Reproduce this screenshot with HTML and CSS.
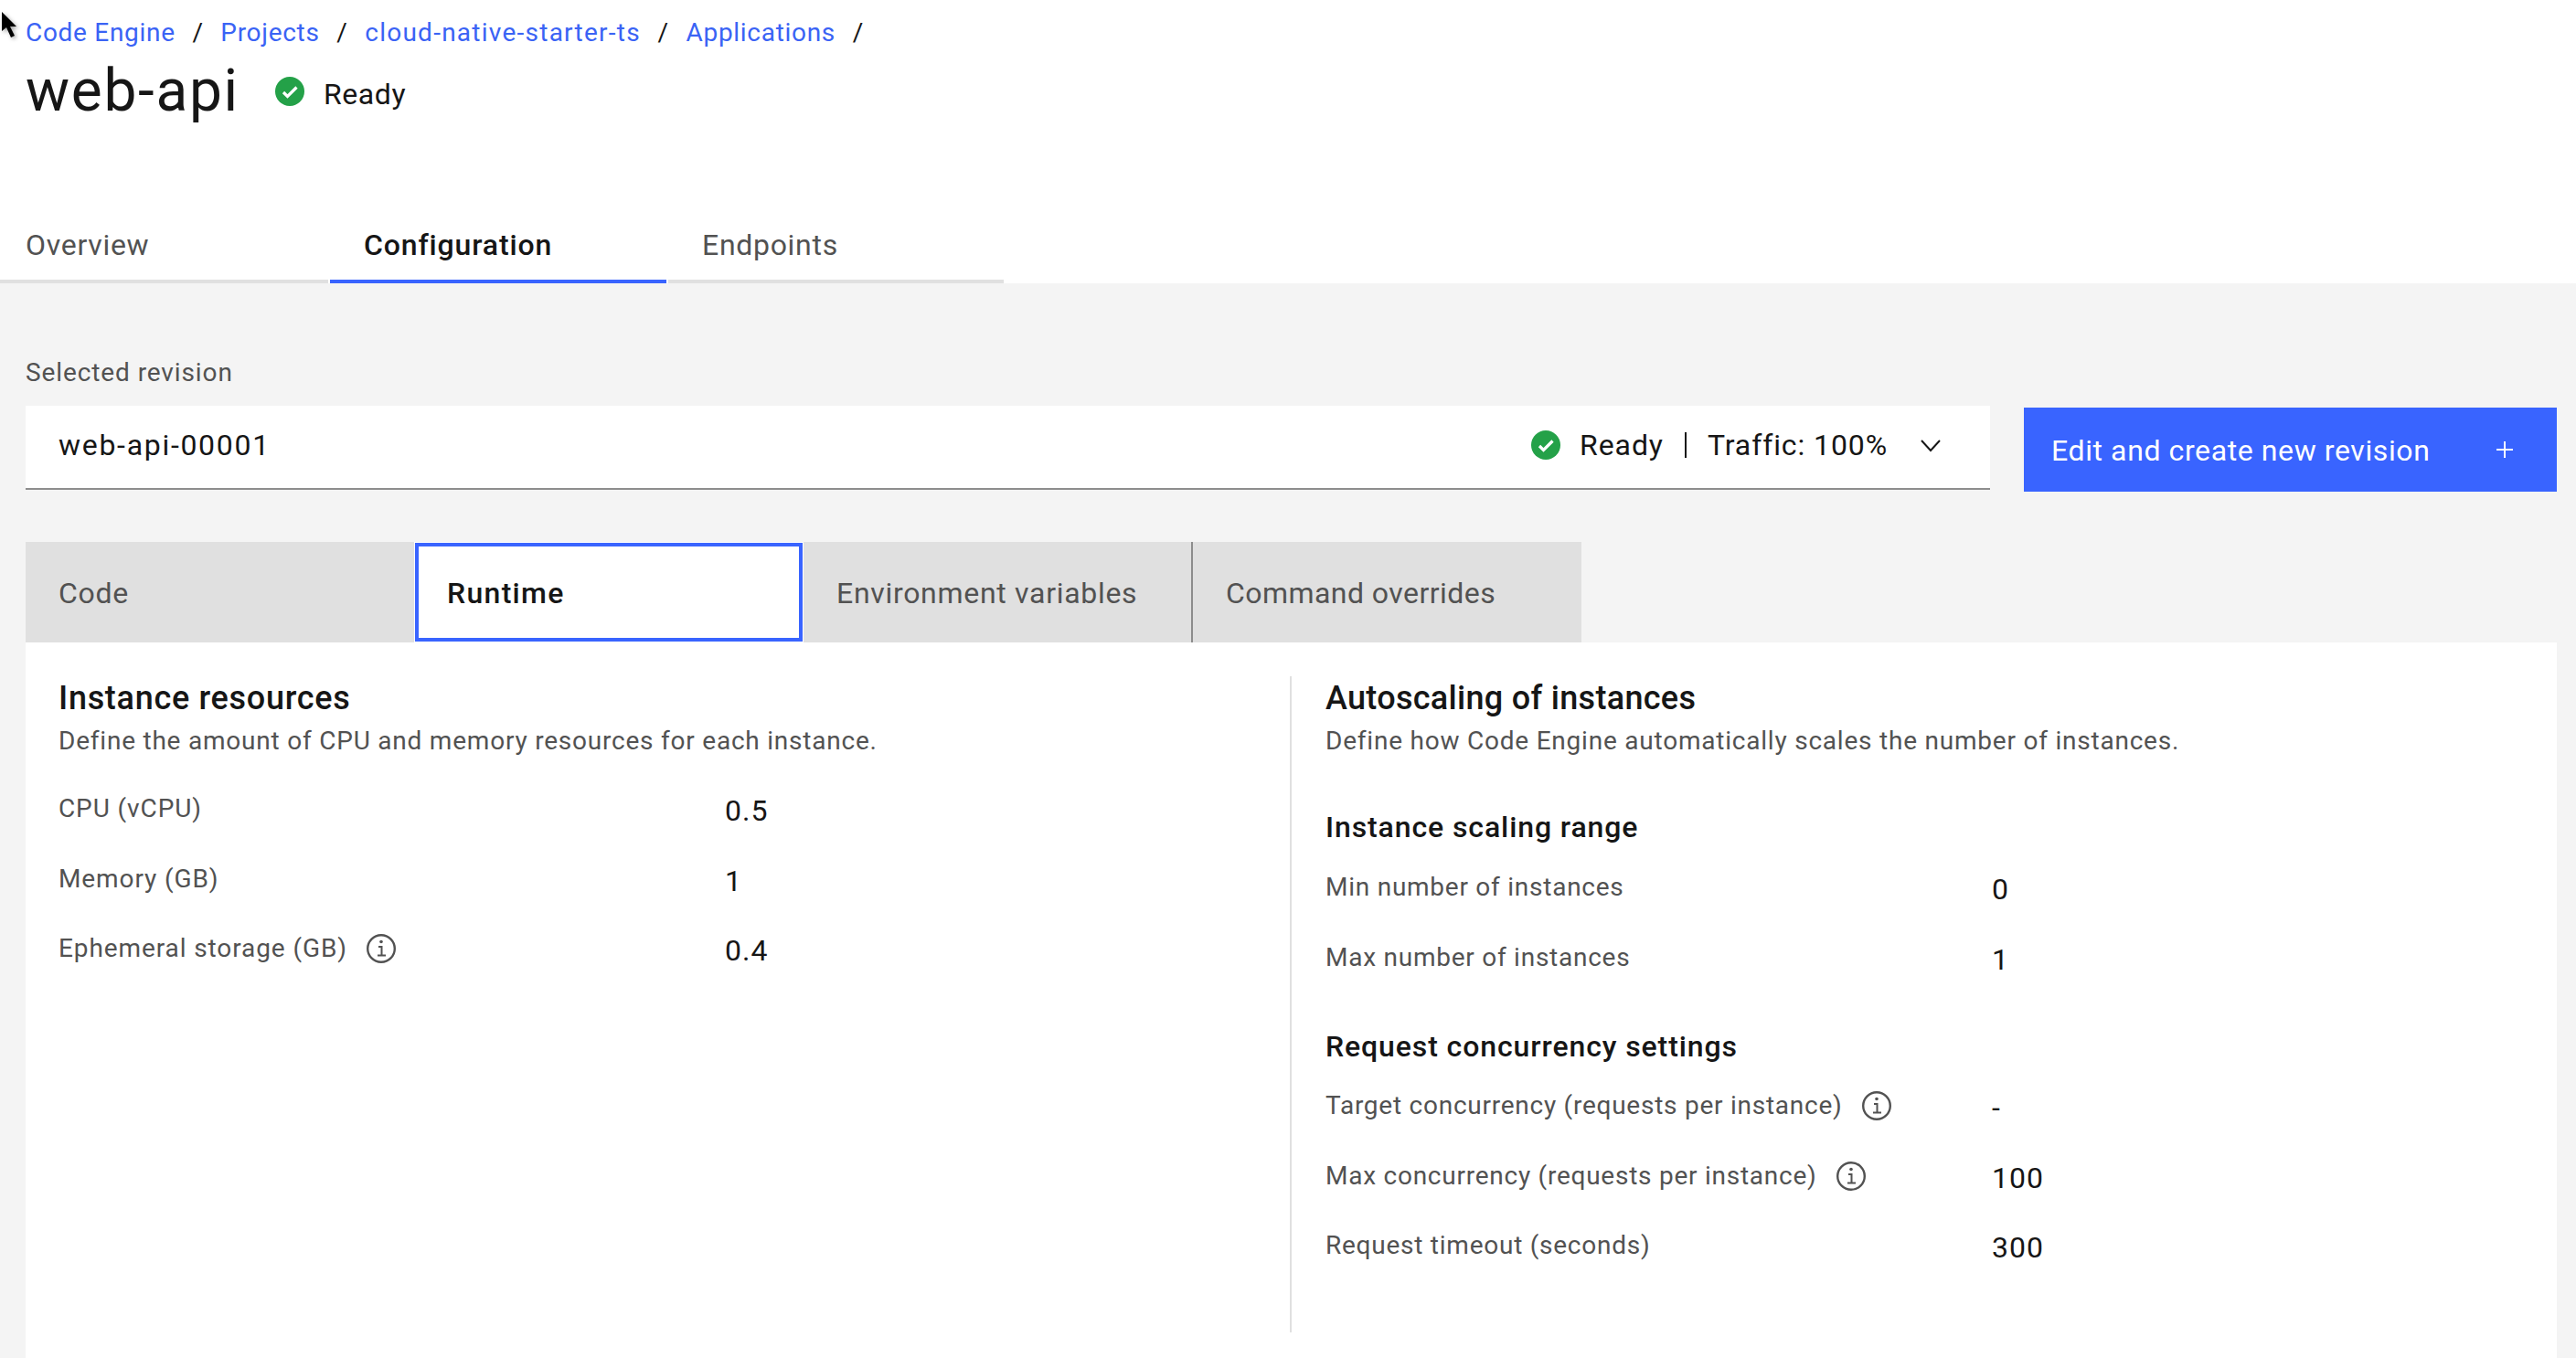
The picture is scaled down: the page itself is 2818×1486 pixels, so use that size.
FILE: index.html
```html
<!DOCTYPE html>
<html lang="en">
<head>
<meta charset="utf-8">
<title>web-api</title>
<link rel="stylesheet" href="styles.css">
</head>
<body>
<svg class="cursor" width="20" height="32" viewBox="0 0 20 32"><path d="M2 1v21l5-4 5 11 4-2-5-10h7z" fill="#000"/></svg>
<header class="top">
  <nav class="crumbs">
    <a>Code Engine</a><span class="sep">/</span><a>Projects</a><span class="sep">/</span><a class="crumb-long">cloud-native-starter-ts</a><span class="sep">/</span><a>Applications</a><span class="sep">/</span>
  </nav>
  <div class="title-row">
    <h1>web-api</h1>
    <svg class="ok ok-title" viewBox="0 0 32 32"><circle cx="16" cy="16" r="16" fill="#24a148"/><path d="M9 17l4.500 4.500L23.500 11.500" fill="none" stroke="#fff" stroke-width="3.200"/></svg>
    <span class="ready">Ready</span>
  </div>
  <div class="tabs">
    <div class="tab first">Overview</div>
    <div class="tab active">Configuration</div>
    <div class="tab last">Endpoints</div>
  </div>
</header>
<main class="main">
  <div class="field-label">Selected revision</div>
  <div class="rev-row">
    <div class="select">
      <span class="select-name">web-api-00001</span>
      <span class="select-status">
        <svg class="ok" viewBox="0 0 32 32"><circle cx="16" cy="16" r="16" fill="#24a148"/><path d="M9 17l4.500 4.500L23.500 11.500" fill="none" stroke="#fff" stroke-width="3.200"/></svg>
        <span>Ready</span><span class="pipe"></span><span>Traffic: 100%</span>
        <svg class="chev" viewBox="0 0 24 24"><path d="M2 5l10 11L22 5" fill="none" stroke="#161616" stroke-width="2"/></svg>
      </span>
    </div>
    <button class="primary"><span>Edit and create new revision</span><svg class="plus" viewBox="0 0 20 20"><path d="M10 1v18M1 10h18" stroke="#fff" stroke-width="2"/></svg></button>
  </div>
  <div class="ctabs">
    <div class="ctab">Code</div>
    <div class="ctab current">Runtime</div>
    <div class="ctab">Environment variables</div>
    <div class="ctab split">Command overrides</div>
  </div>
  <section class="panel">
    <div class="col col-left">
      <h2>Instance resources</h2>
      <p class="desc">Define the amount of CPU and memory resources for each instance.</p>
      <dl class="rows rows-left">
        <div class="row"><dt>CPU (vCPU)</dt><dd>0.5</dd></div>
        <div class="row"><dt>Memory (GB)</dt><dd>1</dd></div>
        <div class="row"><dt>Ephemeral storage (GB)<svg class="info" viewBox="0 0 32 32"><circle cx="16" cy="16" r="14.800" fill="none" stroke="#525252" stroke-width="2.400"/><path d="M13 14h3.500v9.500M12 23.500h9" fill="none" stroke="#525252" stroke-width="2"/><circle cx="16" cy="8.500" r="1.800" fill="#525252"/></svg></dt><dd>0.4</dd></div>
      </dl>
    </div>
    <div class="col col-right">
      <h2>Autoscaling of instances</h2>
      <p class="desc">Define how Code Engine automatically scales the number of instances.</p>
      <h3 class="h-range">Instance scaling range</h3>
      <dl class="rows rows-range">
        <div class="row"><dt>Min number of instances</dt><dd>0</dd></div>
        <div class="row"><dt>Max number of instances</dt><dd>1</dd></div>
      </dl>
      <h3 class="h-conc">Request concurrency settings</h3>
      <dl class="rows rows-conc">
        <div class="row"><dt>Target concurrency (requests per instance)<svg class="info" viewBox="0 0 32 32"><circle cx="16" cy="16" r="14.800" fill="none" stroke="#525252" stroke-width="2.400"/><path d="M13 14h3.500v9.500M12 23.500h9" fill="none" stroke="#525252" stroke-width="2"/><circle cx="16" cy="8.500" r="1.800" fill="#525252"/></svg></dt><dd>-</dd></div>
        <div class="row"><dt>Max concurrency (requests per instance)<svg class="info" viewBox="0 0 32 32"><circle cx="16" cy="16" r="14.800" fill="none" stroke="#525252" stroke-width="2.400"/><path d="M13 14h3.500v9.500M12 23.500h9" fill="none" stroke="#525252" stroke-width="2"/><circle cx="16" cy="8.500" r="1.800" fill="#525252"/></svg></dt><dd>100</dd></div>
        <div class="row"><dt>Request timeout (seconds)</dt><dd>300</dd></div>
      </dl>
    </div>
  </section>
</main>
</body>
</html>
```
FILE: styles.css
```css
* { box-sizing: border-box; }
html, body { margin: 0; height: 100%; }
body {
  position: relative;
  overflow: hidden;
  background: #f4f4f4;
  color: #161616;
  font-family: "Roboto", "Liberation Sans", sans-serif;
  font-size: 28px;
  height: 1486px;
}
.cursor { position: absolute; left: 0; top: 12px; filter: drop-shadow(2px 2px 2px rgba(0,0,0,.35)); }
.top { background: #fff; height: 310px; padding-top: 17px; }
.crumbs { display: flex; align-items: center; height: 36px; padding-left: 28px; font-size: 28px; letter-spacing: .7px; }
.crumbs a { color: #3a63f5; }
.crumb-long { letter-spacing: 1.25px; }
.sep { margin: 0 18.700px; color: #161616; }
.title-row { display: flex; align-items: center; height: 84px; padding-left: 28px; margin-top: 5px; }
h1 { margin: 0; font-size: 64px; font-weight: 400; line-height: 84px; letter-spacing: 1.7px; }
.ok { width: 32px; height: 32px; flex: none; }
.ok-title { margin-left: 39px; }
.ready { margin: 6px 0 0 21px; font-size: 32px; letter-spacing: .6px; }
.tabs { display: flex; width: 1098px; margin-top: 84px; gap: 2px; height: 84px; }
.tab { height: 84px; padding: 22px 0 0 28px; font-size: 32px; line-height: 40px; color: #525252; letter-spacing: .7px; border-bottom: 4px solid #e0e0e0; }
.tab.first { flex: 0 0 359px; }
.tab.active { flex: 0 0 368px; padding-left: 37px; color: #161616; font-weight: 500; letter-spacing: .85px; border-bottom-color: #3964ff; }
.tab.last { flex: 1; padding-left: 37px; }
.main { padding: 0 21px 0 28px; }
.field-label { height: 134px; padding-top: 84px; line-height: 28px; color: #525252; letter-spacing: .9px; }
.rev-row { display: flex; gap: 37px; align-items: flex-start; }
.select { flex: 0 0 2149px; height: 92px; display: flex; align-items: center; justify-content: space-between; padding: 0 53px 4px 36px; background: #fff; border-bottom: 2px solid #8d8d8d; font-size: 32px; letter-spacing: .6px; }
.select-name { letter-spacing: 1.7px; }
.select-status { display: flex; align-items: center; letter-spacing: .9px; }
.select-status .ok { margin-right: 21px; }
.pipe { width: 2px; height: 28px; margin: 0 23px; background: #161616; }
.chev { width: 24px; height: 24px; margin-left: 35px; margin-top: 4px; }
.primary { flex: 1; height: 92px; margin-top: 2px; border: 0; padding: 2px 47px 0 30px; background: #3964ff; color: #fff; display: flex; align-items: center; justify-content: space-between; font: inherit; font-size: 32px; letter-spacing: .6px; }
.plus { width: 20px; height: 20px; margin-top: -2px; }
.ctabs { display: flex; margin-top: 55px; height: 110px; width: 1702px; background: #e0e0e0; }
.ctab { display: flex; align-items: center; padding: 2px 0 0 36px; font-size: 32px; letter-spacing: .7px; color: #525252; }
.ctab:nth-child(1) { width: 426px; }
.ctab.current { width: 424px; margin: 1px 0; padding-left: 31px; background: #fff; color: #161616; font-weight: 500; letter-spacing: 1.3px; border: 4px solid #3964ff; outline: 1px solid #fff; }
.ctab:nth-child(3) { width: 425px; padding-left: 37px; }
.ctab.split { flex: 1; letter-spacing: .45px; border-left: 2px solid #8d8d8d; }
.panel { display: grid; grid-template-columns: 1383px 1fr; height: 783px; padding-top: 37px; background: #fff; align-items: start; }
.col { height: 718px; }
.col-left { padding-left: 36px; }
.col-right { padding-left: 37px; border-left: 2px solid #e0e0e0; }
h2 { margin: 0; font-size: 36px; line-height: 48px; font-weight: 500; letter-spacing: .7px; }
.col-right h2 { letter-spacing: .3px; }
.desc { margin: 0; padding-top: 5px; font-size: 28px; line-height: 36px; color: #525252; letter-spacing: .78px; }
h3 { margin: 0; font-size: 32px; line-height: 40px; font-weight: 500; letter-spacing: .9px; }
.h-range { margin-top: 56px; }
.h-conc { margin-top: 19px; }
.rows { margin: 0; }
.rows-left { padding-top: 38px; }
.rows-range { padding-top: 28px; }
.rows-conc { padding-top: 27px; }
.row { display: grid; grid-template-columns: 729px 1fr; height: 76.500px; }
dt { display: flex; align-items: flex-start; line-height: 36px; color: #525252; letter-spacing: .75px; }
.rows-left dt { letter-spacing: .9px; }
dd { margin: 2px 0 0; font-size: 32px; line-height: 36px; letter-spacing: 1px; }
.info { width: 32px; height: 32px; margin: 2px 0 0 21px; flex: none; }
```
